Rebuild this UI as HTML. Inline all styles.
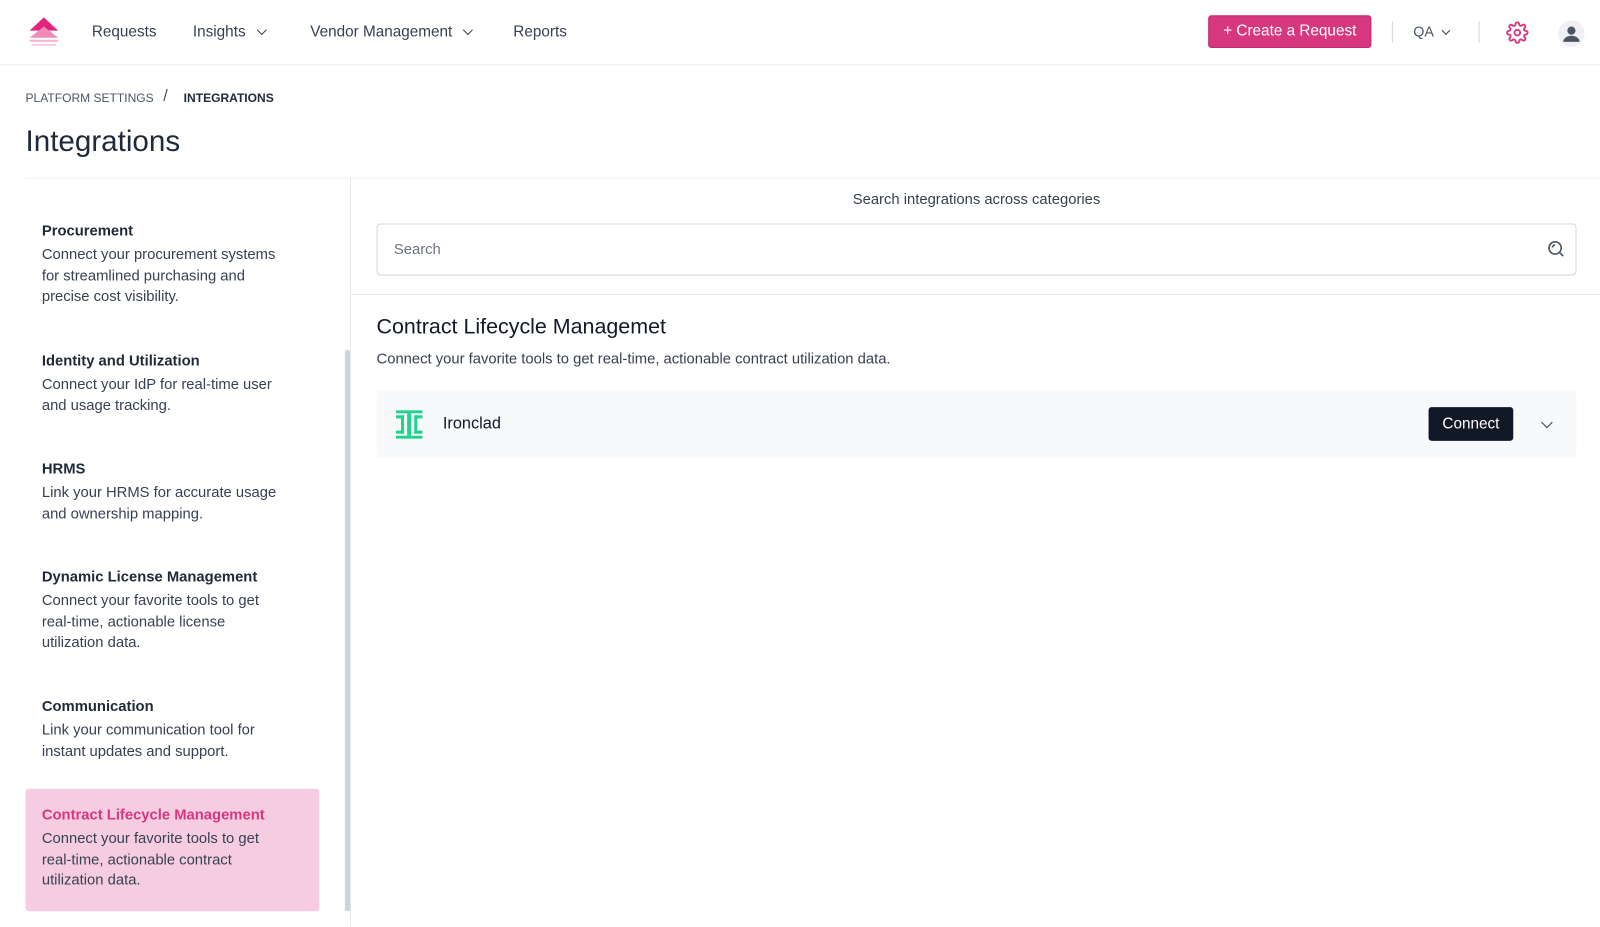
<!DOCTYPE html>
<html><head><meta charset="utf-8"><style>
*{box-sizing:border-box;margin:0;padding:0}
body{width:1600px;height:908px;overflow:hidden;background:#fff;font-family:"Liberation Sans",sans-serif;color:#1f2937;position:relative}
#w{position:absolute;left:0;top:0;width:1568px;height:890px;transform:scale(1.0204);transform-origin:0 0}
.hdr{position:absolute;left:0;top:0;width:1568px;height:64px;border-bottom:1px solid #eef0f3}
.nav{position:absolute;top:23px;font-size:15px;color:#374151}
.chev{display:inline-block;width:7px;height:7px;border-right:1.8px solid #374151;border-bottom:1.8px solid #374151;transform:rotate(45deg);margin-left:12px;position:relative;top:-3px}
.btn{position:absolute;left:1184px;top:15px;width:160px;height:32px;background:#d6377f;border:1px solid #c22a70;border-radius:3px;color:#fff;font-size:15px;line-height:30px;text-align:center}
.sep{position:absolute;top:21px;width:1px;height:21px;background:#d1d5db}
.bc{position:absolute;top:89px;font-size:11.8px}
h1{position:absolute;left:25px;top:123px;font-size:29px;font-weight:normal;color:#1f2937}
.side{position:absolute;left:25px;top:174px;width:318px;height:734px;border-top:1px solid #eef0f3}
.cat{position:absolute;left:16px;width:242px}
.cat b{display:block;font-size:14.5px;font-weight:bold;color:#1f2937;margin-bottom:5px}
.cat p{font-size:14.5px;line-height:20.5px;color:#374151}
.main{position:absolute;left:343px;top:174px;width:1225px;height:734px;border-left:1px solid #e5e7eb;border-top:1px solid #eef0f3}
</style></head><body><div id="w">
<div class="hdr">
<svg style="position:absolute;left:27px;top:16px" width="32" height="30" viewBox="0 0 32 30"><path d="M16 1L30 14H2Z" fill="#e4237f"/><path d="M16 10L30 21H2Z" fill="#ee8cb8"/><path d="M2 23H30V25H2Z" fill="#f3b5d0"/><path d="M4 27H28V29H4Z" fill="#f7cfe0"/></svg>
<div class="nav" style="left:90px">Requests</div>
<div class="nav" style="left:189px">Insights<span class="chev"></span></div>
<div class="nav" style="left:304px">Vendor Management<span class="chev"></span></div>
<div class="nav" style="left:503px">Reports</div>
<div class="btn">+ Create a Request</div>
<div class="sep" style="left:1364px"></div>
<div class="nav" style="left:1385px;color:#4b5563;font-size:14px">QA<span class="chev" style="width:6px;height:6px;margin-left:9px"></span></div>
<div class="sep" style="left:1449px"></div>
<svg style="position:absolute;left:1476px;top:21px" width="22" height="22" viewBox="0 0 24 24" fill="none" stroke="#d6377f" stroke-width="2"><circle cx="12" cy="12" r="3"/><path d="M19.4 15a1.7 1.7 0 0 0 .3 1.8l.1.1a2 2 0 1 1-2.8 2.8l-.1-.1a1.7 1.7 0 0 0-1.8-.3 1.7 1.7 0 0 0-1 1.5V21a2 2 0 1 1-4 0v-.1a1.7 1.7 0 0 0-1.1-1.5 1.7 1.7 0 0 0-1.8.3l-.1.1a2 2 0 1 1-2.8-2.8l.1-.1a1.7 1.7 0 0 0 .3-1.8 1.7 1.7 0 0 0-1.5-1H3a2 2 0 1 1 0-4h.1a1.7 1.7 0 0 0 1.5-1.1 1.7 1.7 0 0 0-.3-1.8l-.1-.1a2 2 0 1 1 2.8-2.8l.1.1a1.7 1.7 0 0 0 1.8.3H9a1.7 1.7 0 0 0 1-1.5V3a2 2 0 1 1 4 0v.1a1.7 1.7 0 0 0 1 1.5 1.7 1.7 0 0 0 1.8-.3l.1-.1a2 2 0 1 1 2.8 2.8l-.1.1a1.7 1.7 0 0 0-.3 1.8V9a1.7 1.7 0 0 0 1.5 1H21a2 2 0 1 1 0 4h-.1a1.7 1.7 0 0 0-1.5 1z"/></svg>
<svg style="position:absolute;left:1527px;top:20px" width="26" height="26" viewBox="0 0 26 26"><circle cx="13" cy="13" r="13" fill="#eef0f3"/><circle cx="13" cy="10" r="4" fill="#4b5563"/><path d="M5 21a8 6 0 0 1 16 0Z" fill="#4b5563"/></svg>
</div>
<div class="bc" style="left:25px;color:#4b5563">PLATFORM SETTINGS</div>
<div class="bc" style="left:160px;color:#4b5563;font-size:16px;top:86px">/</div>
<div class="bc" style="left:180px;font-weight:bold;color:#1f2937">INTEGRATIONS</div>
<h1>Integrations</h1>
<div class="side">
<div class="cat" style="top:44px"><b>Procurement</b><p>Connect your procurement systems for streamlined purchasing and precise cost visibility.</p></div>
<div class="cat" style="top:171px"><b>Identity and Utilization</b><p>Connect your IdP for real-time user and usage tracking.</p></div>
<div class="cat" style="top:277px"><b>HRMS</b><p>Link your HRMS for accurate usage and ownership mapping.</p></div>
<div class="cat" style="top:383px"><b>Dynamic License Management</b><p>Connect your favorite tools to get real-time, actionable license utilization data.</p></div>
<div class="cat" style="top:510px"><b>Communication</b><p>Link your communication tool for instant updates and support.</p></div>
<div style="position:absolute;left:0;top:598px;width:288px;height:120px;background:#f6cde0;border-radius:3px"></div>
<div class="cat" style="top:616px"><b style="color:#d6377f">Contract Lifecycle Management</b><p>Connect your favorite tools to get real-time, actionable contract utilization data.</p></div>
<div style="position:absolute;left:313px;top:168px;width:5px;height:550px;background:#cbd5e1;border-radius:2px"></div>
</div>
<div class="main">
<div style="position:absolute;left:0;top:13px;width:1226px;text-align:center;font-size:14.5px;color:#374151">Search integrations across categories</div>
<div style="position:absolute;left:25px;top:44px;width:1176px;height:51px;border:1px solid #d1d5db;border-radius:4px"><span style="position:absolute;left:16px;top:17px;font-size:14.5px;color:#6b7280">Search</span>
<svg style="position:absolute;right:10px;top:15px" width="18" height="18" viewBox="0 0 18 18" fill="none" stroke="#4b5563" stroke-width="1.6"><circle cx="8" cy="8" r="6"/><path d="M12.5 12.5L16 16M5.5 7.5a2.5 2.5 0 0 1 2.5-2.5"/></svg></div>
<div style="position:absolute;left:0;top:113px;width:1225px;height:1px;background:#e5e7eb"></div>
<div style="position:absolute;left:25px;top:134px;font-size:21px;color:#111827">Contract Lifecycle Managemet</div>
<div style="position:absolute;left:25px;top:169px;font-size:14.5px;color:#374151">Connect your favorite tools to get real-time, actionable contract utilization data.</div>
<div style="position:absolute;left:25px;top:208px;width:1176px;height:65px;background:#f8f9fb;border-radius:4px">
<svg style="position:absolute;left:19px;top:19px" width="26" height="28" viewBox="0 0 26 28" fill="#1fd38f"><rect x="0" y="0" width="26" height="3"/><rect x="0" y="25" width="26" height="3"/><rect x="11" y="3" width="4" height="22"/><rect x="0" y="5" width="8" height="3"/><rect x="5" y="5" width="3" height="18"/><rect x="0" y="20" width="8" height="3"/><rect x="18" y="5" width="8" height="3"/><rect x="18" y="5" width="3" height="18"/><rect x="18" y="20" width="8" height="3"/></svg>
<div style="position:absolute;left:65px;top:24px;font-size:16px;color:#111827">Ironclad</div>
<div style="position:absolute;left:1031px;top:16px;width:83px;height:33px;background:#111827;border-radius:3px;color:#fff;font-size:15px;line-height:33px;text-align:center">Connect</div>
<span class="chev" style="position:absolute;left:1143px;top:27px;margin:0;width:8px;height:8px"></span>
</div>
</div>
</div></body></html>
